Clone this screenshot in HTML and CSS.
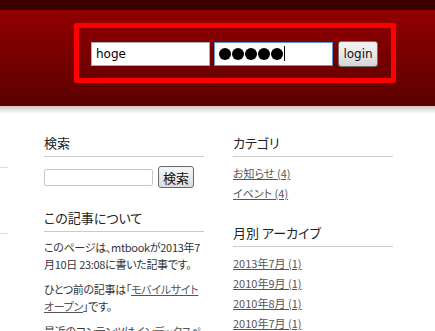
FILE: index.html
```html
<!DOCTYPE html>
<html lang="ja">
  <head>
    <meta charset="UTF-8" />
    <title>mtbook</title>
    <link rel="stylesheet" href="styles.css">
  </head>
  <body>
    <div class="masthead">
      <div class="topbar"></div>
      <div class="header">
        <form class="login-box">
          <input class="field" type="text" value="hoge" />
          <div class="field field-focus">
            <span class="dot"></span><span class="dot"></span><span class="dot"></span><span class="dot"></span><span class="dot"></span><span class="caret"></span>
          </div>
          <button class="login-btn" type="button">login</button>
        </form>
      </div>
    </div>
    <div class="shade"></div>

    <div class="content">
      <div class="main-stub">
        <div class="stub-line"></div>
        <div class="stub-line second"></div>
      </div>

      <div class="sidebar">
        <div class="widget">
          <h3 class="widget-title">検索</h3>
          <form class="search">
            <input class="search-field" type="text" />
            <button class="search-btn" type="button">検索</button>
          </form>
        </div>
        <div class="widget">
          <h3 class="widget-title">この記事について</h3>
          <p>このページは、mtbookが2013年7月10日 23:08に書いた記事です。</p>
          <p>ひとつ前の記事は「<a href="#">モバイルサイトオープン</a>」です。</p>
          <p>最近のコンテンツは<a href="#">インデックスページ</a>で見られます。</p>
        </div>
      </div>

      <div class="sidebar">
        <div class="widget">
          <h3 class="widget-title">カテゴリ</h3>
          <ul class="links">
            <li><a href="#">お知らせ (4)</a></li>
            <li><a href="#">イベント (4)</a></li>
          </ul>
        </div>
        <div class="widget">
          <h3 class="widget-title">月別 アーカイブ</h3>
          <ul class="links">
            <li><a href="#">2013年7月 (1)</a></li>
            <li><a href="#">2010年9月 (1)</a></li>
            <li><a href="#">2010年8月 (1)</a></li>
            <li><a href="#">2010年7月 (1)</a></li>
          </ul>
        </div>
      </div>
    </div>
  </body>
</html>
```

FILE: styles.css
```css
* {
  margin: 0;
  padding: 0;
  box-sizing: border-box;
}

body {
  background: #fff;
  color: #333;
  font-family: 'Noto Sans CJK JP', 'DejaVu Sans', sans-serif;
  font-feature-settings: "palt";
  overflow: hidden;
}

/* --- header --- */
.topbar {
  height: 10px;
  background: #3d0000;
}
.header {
  height: 96px;
  background: linear-gradient(#920000, #5c0000);
  display: flex;
  justify-content: flex-end;
  align-items: flex-start;
  padding: 13px 39px 0 0;
}
.shade {
  height: 8px;
  background: linear-gradient(#cfc8c8, #fff);
}
.login-box {
  width: 322px;
  height: 60px;
  border: 5px solid #ff0000;
  border-radius: 2px;
  display: flex;
  align-items: center;
  padding: 1px 13px 0 12px;
}
.field {
  width: 119px;
  height: 24px;
  border: 1px solid #a9abb0;
  background: #fff;
  font-family: 'DejaVu Sans', sans-serif;
  font-size: 12px;
  padding: 0 4px;
  color: #000;
  outline: none;
  margin-right: 4px;
}
.field-focus {
  display: flex;
  align-items: center;
  border-color: #5b9bd5;
  margin-right: 5px;
}
.dot {
  width: 12px;
  height: 12px;
  border-radius: 50%;
  background: #000;
  margin-right: 1px;
}
.caret {
  width: 1px;
  height: 15px;
  background: #000;
}
.login-btn {
  width: 40px;
  height: 26px;
  border: 1px solid #707070;
  border-radius: 3px;
  background: linear-gradient(#f4f4f4 0%, #e8e8e8 50%, #d4d4d4 100%);
  font-family: 'DejaVu Sans', sans-serif;
  font-size: 12px;
  color: #111;
}

/* --- content --- */
.content {
  display: flex;
  padding-top: 19px;
}
.main-stub {
  width: 8px;
  margin-right: 36px;
  padding-top: 34px;
}
.stub-line {
  height: 1px;
  background: #ddd;
}
.stub-line.second {
  margin-top: 65px;
}
.sidebar {
  width: 160px;
  margin-right: 29px;
}
.widget {
  margin-bottom: 20px;
}
.widget-title {
  font-size: 13px;
  font-weight: normal;
  line-height: 20px;
  padding-bottom: 3px;
  border-bottom: 1px solid #ccc;
  color: #222;
}
.search {
  display: flex;
  align-items: center;
  margin-top: 9px;
  height: 22px;
}
.search-field {
  width: 109px;
  height: 17px;
  border: 1px solid #c8c8c8;
  border-radius: 2px;
  margin-right: 5px;
}
.search-btn {
  width: 36px;
  height: 22px;
  border: 1px solid #6a6a6a;
  border-radius: 3px;
  background: linear-gradient(#f6f6f6, #dcdcdc);
  font-family: 'Noto Sans CJK JP', sans-serif;
  font-size: 13px;
  color: #111;
}
.widget p {
  font-size: 11px;
  line-height: 17px;
  letter-spacing: -0.3px;
  margin-top: 8px;
}
.widget-title + p {
  margin-top: 7px;
}
a {
  color: #555;
}
.links {
  list-style: none;
  margin-top: 6px;
}
.links li {
  font-size: 11px;
  line-height: 20px;
}
```
